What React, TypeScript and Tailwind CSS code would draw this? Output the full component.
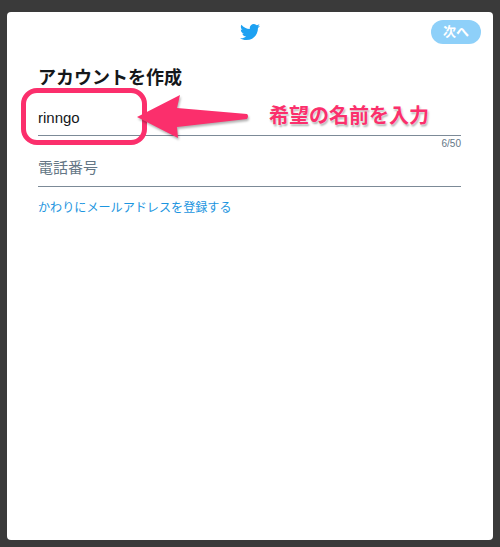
import { FaTwitter } from "react-icons/fa";

const jp = "font-['Liberation_Sans','Noto_Sans_CJK_JP',sans-serif]";

function Header() {
  return (
    <div className="relative flex h-[40px] items-center justify-center">
      <FaTwitter className="h-[20px] w-[20px] text-[#1da1f2]" />
      <button
        type="button"
        className="absolute right-[12px] top-[8px] flex h-[24px] w-[50px] items-center justify-center rounded-full bg-[#8ed0f9] text-[13px] font-bold text-white"
      >
        次へ
      </button>
    </div>
  );
}

function Annotation() {
  return (
    <>
      <div className="absolute left-[14px] top-[76px] h-[57px] w-[126px] rounded-[16px] border-[5px] border-[#fb2f6c]" />
      <svg
        className="absolute left-[128px] top-[81px] drop-shadow-[1px_2px_1px_rgba(0,0,0,0.3)]"
        width="124"
        height="56"
        viewBox="0 0 124 56"
      >
        <path d="M2 24 L45 2 L42 15 L112 21 Q114 23 112 26 L42 34 L43 45 Z" fill="#fb2f6c" />
      </svg>
      <div className="absolute left-[262px] top-[91px] whitespace-nowrap text-[20px] font-bold leading-[26px] text-[#fb2f6c] [text-shadow:0_0_3px_#fff,1px_2px_2px_rgba(0,0,0,0.35)]">
        希望の名前を入力
      </div>
    </>
  );
}

export default function App() {
  return (
    <div className={`h-[547px] w-[500px] bg-[#3a3a3a] pb-[7px] pl-[7px] pr-[7px] pt-[12px] ${jp}`}>
      <div className="relative h-[528px] rounded-[4px] bg-white">
        <Header />
        <div className="pl-[31px] pr-[32px]">
          <h1 className="mt-[15px] text-[18px] font-bold leading-[22px] text-[#14171a]">アカウントを作成</h1>
          <div className="mt-[19px] flex h-[28px] items-start border-b border-[#7c8a97] text-[15px] leading-[20px] text-[#14171a]">
            rinngo
          </div>
          <div className="mt-[1px] text-right text-[10px] leading-[14px] text-[#657786]">6/50</div>
          <div className="mt-[7px] flex h-[29px] items-start border-b border-[#7c8a97] text-[15px] leading-[20px] text-[#657786]">
            電話番号
          </div>
          <a className="mt-[13px] block text-[12.1px] leading-[16px] text-[#1b95e0]">かわりにメールアドレスを登録する</a>
        </div>
        <Annotation />
      </div>
    </div>
  );
}
